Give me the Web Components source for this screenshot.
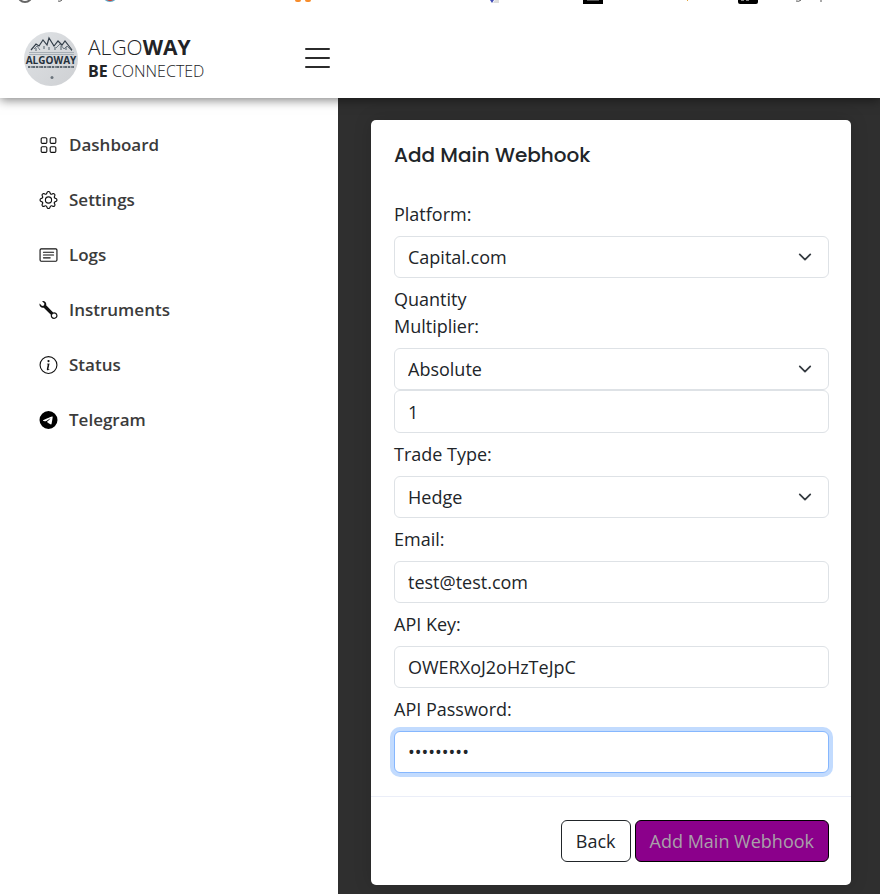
<!DOCTYPE html>
<html lang="en">
<head>
<meta charset="utf-8">
<title>AlgoWay – Add Main Webhook</title>
<style>
html,body{margin:0;min-height:100%}
body{font-family:"Open Sans",sans-serif;font-size:18px;line-height:27px;color:#212529;background:#fff}
</style>
</head>
<body>
<app-shell>
  <app-header slot="header"></app-header>
  <nav-menu slot="nav">
    <nav-item icon="grid">Dashboard</nav-item>
    <nav-item icon="gear">Settings</nav-item>
    <nav-item icon="card">Logs</nav-item>
    <nav-item icon="wrench">Instruments</nav-item>
    <nav-item icon="info">Status</nav-item>
    <nav-item icon="telegram">Telegram</nav-item>
  </nav-menu>
  <modal-card heading="Add Main Webhook">
    <form-field label="Platform:" type="select" value="Capital.com"></form-field>
    <form-field label="Quantity Multiplier:" type="select" value="Absolute" extra="1"></form-field>
    <form-field label="Trade Type:" type="select" value="Hedge"></form-field>
    <form-field label="Email:" type="email" value="test@test.com"></form-field>
    <form-field label="API Key:" type="text" value="OWERXoJ2oHzTeJpC"></form-field>
    <form-field label="API Password:" type="password" value="passwords" active></form-field>
    <action-button slot="footer">Back</action-button>
    <action-button slot="footer" primary>Add Main Webhook</action-button>
  </modal-card>
</app-shell>
<script>
const define = (name, render) => customElements.define(name, class extends HTMLElement {
  connectedCallback() {
    if (!this.shadowRoot) this.attachShadow({mode: 'open'}).innerHTML = render(this);
  }
});

define('app-shell', () => `
<style>
:host{display:flex;flex-direction:column;min-height:100vh}
.body{display:flex;flex:1}
aside{flex:0 0 338px}
main{flex:1;min-width:0;background:#2f2f2f;padding:22px 29px 9px 33px}
</style>
<slot name="header"></slot>
<div class="body"><aside><slot name="nav"></slot></aside><main><slot></slot></main></div>`);

define('app-header', () => `
<style>
:host{display:block;position:relative;background:#fff;box-shadow:0 2px 10px rgba(0,0,0,.5);color:#222326}
.strip{display:block;height:5px}
.bar{display:flex;align-items:center;height:93px;padding:0 24px;box-sizing:border-box}
.brand{display:flex;align-items:center;gap:10px;color:inherit;text-decoration:none;width:281px;padding-bottom:12px;padding-top:27px;box-sizing:border-box}
.brand svg{flex:none}
.words{display:grid;font-weight:300}
.name{font-size:21px;line-height:24px}
.tag{font-size:16px;line-height:24px}
b{font-weight:700}
button{display:flex;border:0;background:none;padding:13px 0 0;color:inherit}
</style>
<svg class="strip" width="880" height="5" viewBox="0 0 880 5" aria-hidden="true">
  <circle cx="25" cy="-5" r="7" fill="none" stroke="#666" stroke-width="2"/>
  <path d="M58 1q2 1 4-1" fill="none" stroke="#555"/>
  <circle cx="110" cy="-6" r="8" fill="#5cabc9"/><circle cx="110" cy="-3" r="4" fill="#d43a2d"/>
  <rect x="295" y="-4" width="6" height="6" rx="2" fill="#f78d2c"/><rect x="305" y="-4" width="6" height="6" rx="2" fill="#f78d2c"/>
  <path d="M490 0h4l-2 3z" fill="#4550b5"/><path d="M493 3l2-3h4v3z" fill="#ddd"/>
  <rect x="583" y="-6" width="20" height="10" fill="#000"/><rect x="587" y="0" width="12" height="1" fill="#555"/>
  <rect x="687" y="0" width="1" height="1" fill="#e5a83e"/>
  <rect x="738" y="-8" width="20" height="12" rx="2" fill="#000"/><path d="M741 0h3M746 0h3" stroke="#fff"/>
  <path d="M796 1q3 1 5-1" fill="none" stroke="#555"/><path d="M821 0v2" stroke="#555"/>
</svg>
<div class="bar">
  <a class="brand" href="#">
    <svg width="54" height="54" viewBox="0 0 54 54" aria-hidden="true">
      <defs><linearGradient id="g" x1="0" y1="0" x2="1" y2="1"><stop offset="0" stop-color="#dfe2e5"/><stop offset="1" stop-color="#ced0d3"/></linearGradient></defs>
      <circle cx="27" cy="27" r="27" fill="url(#g)"/>
      <path d="M7 18l5-6 3 2 4-6 4 5 2-7 5 8 4-5 4 4 3-4 7 9" fill="none" stroke="#333e49" stroke-width="1.2"/>
      <path d="M12 16v3M20 14v3M25 15v3M31 15v3M37 14v4M42 15v3" fill="none" stroke="#53606b" stroke-width="1"/>
      <path d="M10 17l3-3 3 4M32 16l4-4 4 5 3-3 5 5" fill="none" stroke="#53606b" stroke-width=".8"/>
      <path d="M5 20.500h45M5 22.500h45" stroke="#87929b" stroke-width=".6"/>
      <text x="27" y="32" text-anchor="middle" font-family="Open Sans" font-size="10" font-weight="700" fill="#26313c">ALGOWAY</text>
      <path d="M4 35h46" stroke="#5d6770" stroke-width="1.800" stroke-dasharray="2 .7 1 .5 3 .8"/>
      <circle cx="28" cy="45.500" r="1.500" fill="#6b747c"/>
    </svg>
    <span class="words"><span class="name">ALGO<b>WAY</b></span><span class="tag"><b>BE</b> CONNECTED</span></span>
  </a>
  <button type="button" aria-label="Toggle menu"><svg width="25" height="22" viewBox="0 0 25 22" fill="none" stroke="#2b2b2b" stroke-width="2" stroke-linecap="round"><path d="M1 2h23M1 11h23M1 20h23"/></svg></button>
</div>`);

define('nav-menu', () => `
<style>:host{display:block}nav{display:grid;gap:28px;padding:33px 16px 16px 39px}</style>
<nav aria-label="Main"><slot></slot></nav>`);

const icons = {
  grid: '<g fill="none" stroke="currentColor"><rect x="1.500" y="1.500" width="5" height="5" rx="1"/><rect x="9.500" y="1.500" width="5" height="5" rx="1"/><rect x="1.500" y="9.500" width="5" height="5" rx="1"/><rect x="9.500" y="9.500" width="5" height="5" rx="1"/></g>',
  gear: '<path d="M8 4.754a3.246 3.246 0 1 0 0 6.492 3.246 3.246 0 0 0 0-6.492M5.754 8a2.246 2.246 0 1 1 4.492 0 2.246 2.246 0 0 1-4.492 0"/><path d="M9.796 1.343c-.527-1.79-3.065-1.79-3.592 0l-.094.319a.873.873 0 0 1-1.255.52l-.292-.16c-1.64-.892-3.433.902-2.54 2.541l.159.292a.873.873 0 0 1-.52 1.255l-.319.094c-1.79.527-1.79 3.065 0 3.592l.319.094a.873.873 0 0 1 .52 1.255l-.16.292c-.892 1.64.901 3.434 2.541 2.54l.292-.159a.873.873 0 0 1 1.255.52l.094.319c.527 1.79 3.065 1.79 3.592 0l.094-.319a.873.873 0 0 1 1.255-.52l.292.16c1.64.893 3.434-.902 2.54-2.541l-.159-.292a.873.873 0 0 1 .52-1.255l.319-.094c1.79-.527 1.79-3.065 0-3.592l-.319-.094a.873.873 0 0 1-.52-1.255l.16-.292c.893-1.64-.902-3.433-2.541-2.54l-.292.159a.873.873 0 0 1-1.255-.52zm-2.633.283c.246-.835 1.428-.835 1.674 0l.094.319a1.873 1.873 0 0 0 2.693 1.115l.291-.16c.764-.415 1.6.42 1.184 1.185l-.159.292a1.873 1.873 0 0 0 1.116 2.692l.318.094c.835.246.835 1.428 0 1.674l-.319.094a1.873 1.873 0 0 0-1.115 2.693l.16.291c.415.764-.42 1.6-1.185 1.184l-.291-.159a1.873 1.873 0 0 0-2.693 1.116l-.094.318c-.246.835-1.428.835-1.674 0l-.094-.319a1.873 1.873 0 0 0-2.692-1.115l-.292.16c-.764.415-1.6-.42-1.184-1.185l.159-.291A1.873 1.873 0 0 0 1.945 8.93l-.319-.094c-.835-.246-.835-1.428 0-1.674l.319-.094A1.873 1.873 0 0 0 3.06 4.377l-.16-.292c-.415-.764.42-1.6 1.185-1.184l.292.159a1.873 1.873 0 0 0 2.692-1.115z"/>',
  card: '<path d="M14.5 3a.5.5 0 0 1 .5.5v9a.5.5 0 0 1-.5.5h-13a.5.5 0 0 1-.5-.5v-9a.5.5 0 0 1 .5-.5zm-13-1A1.5 1.5 0 0 0 0 3.5v9A1.5 1.5 0 0 0 1.5 14h13a1.5 1.5 0 0 0 1.5-1.5v-9A1.5 1.5 0 0 0 14.5 2z"/><path d="M3 5.5a.5.5 0 0 1 .5-.5h9a.5.5 0 0 1 0 1h-9a.5.5 0 0 1-.5-.5M3 8a.5.5 0 0 1 .5-.5h9a.5.5 0 0 1 0 1h-9A.5.5 0 0 1 3 8m0 2.5a.5.5 0 0 1 .5-.5h6a.5.5 0 0 1 0 1h-6a.5.5 0 0 1-.5-.5"/>',
  wrench: '<path d="M.102 2.223A3.004 3.004 0 0 0 3.78 5.897l6.341 6.252A3.003 3.003 0 0 0 13 16a3 3 0 1 0-.851-5.878L5.897 3.781A3.004 3.004 0 0 0 2.223.1l2.141 2.142L4 4l-1.757.364zm13.37 9.019.528.026.287.445.445.287.026.529L15 13l-.242.471-.026.529-.445.287-.287.445-.529.026L13 15l-.471-.242-.529-.026-.287-.445-.445-.287-.026-.529L11 13l.242-.471.026-.529.445-.287.287-.445.529-.026L13 11z"/>',
  info: '<path d="M8 15A7 7 0 1 1 8 1a7 7 0 0 1 0 14m0 1A8 8 0 1 0 8 0a8 8 0 0 0 0 16"/><path d="m8.93 6.588-2.29.287-.082.38.45.083c.294.07.352.176.288.469l-.738 3.468c-.194.897.105 1.319.808 1.319.545 0 1.178-.252 1.465-.598l.088-.416c-.2.176-.492.246-.686.246-.275 0-.375-.193-.304-.533zM9 4.5a1 1 0 1 1-2 0 1 1 0 0 1 2 0"/>',
  telegram: '<path fill="#000" d="M16 8A8 8 0 1 1 0 8a8 8 0 0 1 16 0M8.287 5.906q-1.168.486-4.666 2.01-.567.225-.595.442c-.03.243.275.339.69.47l.175.055c.408.133.958.288 1.243.294q.39.01.868-.32 3.269-2.206 3.374-2.23c.05-.012.12-.026.166.016s.042.12.037.141c-.03.129-1.227 1.241-1.846 1.817-.193.18-.33.307-.358.336a8 8 0 0 1-.188.186c-.38.366-.664.64.015 1.088.327.216.589.393.85.571.284.194.568.387.936.629q.14.092.27.187c.331.236.63.448.997.414.214-.02.435-.22.547-.82.265-1.417.786-4.486.906-5.751a1.4 1.4 0 0 0-.013-.315.34.34 0 0 0-.114-.217.53.53 0 0 0-.31-.093c-.3.005-.763.166-2.984 1.09"/>'
};

define('nav-item', el => `
<style>
:host{display:block}
a{display:flex;align-items:center;gap:11px;color:#3b3b3b;text-decoration:none;font-size:17px;font-weight:600;line-height:27px}
svg{flex:none;color:#111}
</style>
<a href="#"><svg width="19" height="18" viewBox="0 0 16 16" fill="currentColor" aria-hidden="true">${icons[el.getAttribute('icon')]}</svg><slot></slot></a>`);

define('modal-card', el => `
<style>
:host{display:block;background:#fff;border-radius:5px;box-shadow:0 0 18px rgba(0,0,0,.15)}
h2{margin:0;padding:21px 23px 0;font-family:Poppins,Inter,sans-serif;font-size:20px;font-weight:500;line-height:28px;color:#212529}
.fields{display:grid;gap:8px;padding:32px 22px 23px 23px}
footer{display:flex;justify-content:flex-end;gap:4px;padding:23px 22px;border-top:1px solid #ebeef8}
</style>
<h2>${el.getAttribute('heading')}</h2>
<div class="fields"><slot></slot></div>
<footer><slot name="footer"></slot></footer>`);

define('form-field', el => {
  const type = el.getAttribute('type'), value = el.getAttribute('value'), extra = el.getAttribute('extra');
  const control = type === 'select'
    ? `<span class="pick"><select id="c"><option>${value}</option></select><svg width="14" height="14" viewBox="0 0 16 16" fill="none" stroke="#343a40" stroke-width="2" stroke-linecap="round" stroke-linejoin="round" aria-hidden="true"><path d="m2 5 6 6 6-6"/></svg></span>`
    : `<input id="c" type="${type}" value="${value}" autocomplete="off">`;
  return `
<style>
:host{display:block}
label{display:block;width:34%;margin-bottom:8px}
input,select{display:block;width:100%;height:42px;box-sizing:border-box;margin:0;padding:0 13px;border:1px solid #dee2e6;border-radius:6px;background:#fff;color:inherit;font:inherit;appearance:none;outline:0}
.pick+input{height:43px}
.pick{display:grid;align-items:center}
.pick>*{grid-area:1/1}
.pick svg{justify-self:end;margin-right:17px;pointer-events:none}
input:focus,:host([active]) input{border-color:#86b7fe;box-shadow:0 0 0 4px #c2dbfe}
</style>
<label for="c">${el.getAttribute('label')}</label>${control}${extra ? `<input type="text" inputmode="decimal" value="${extra}" aria-label="Multiplier value">` : ''}`;
});

define('action-button', el => `
<style>
:host{display:block}
button{display:block;height:42px;padding:0 14px;border:1px solid #212529;border-radius:6px;background:#fff;color:#212529;font:inherit}
:host([primary]) button{background:#8b008b;border-color:#000;color:#a9a0a9}
</style>
<button type="button"><slot></slot></button>`);
</script>
</body>
</html>
